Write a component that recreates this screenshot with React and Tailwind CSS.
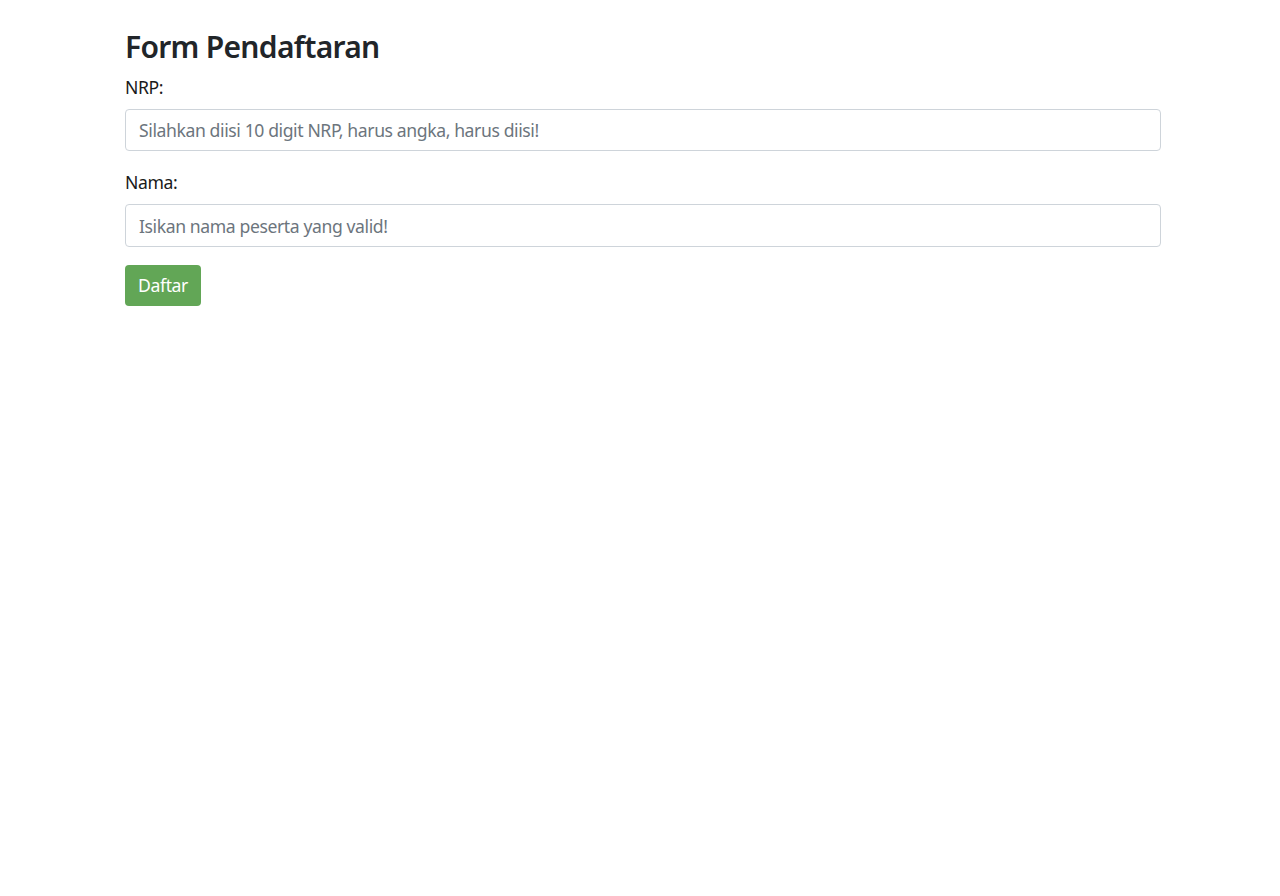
export default function App() {
  return (
    <div
      className="min-h-[896px] bg-white text-[#212529]"
      style={{ fontFamily: '"Noto Sans", "Open Sans", sans-serif' }}
    >
      <div className="ml-[125px] w-[1036px] pt-[28px]">
        <h3 className="mb-[9px] text-[30px] font-semibold leading-[37px] tracking-[-0.7px]">Form Pendaftaran</h3>
        <div className="mb-[18px]">
          <label className="mb-[9px] block text-[17.6px] leading-[26px] tracking-[-0.4px] text-[#1a1a1a]">NRP:</label>
          <input
            type="text"
            placeholder="Silahkan diisi 10 digit NRP, harus angka, harus diisi!"
            className="block h-[42px] w-full rounded-[4px] border border-[#ced4da] px-[13px] text-[17.6px] tracking-[-0.4px] placeholder:text-[#6c757d] outline-none"
          />
        </div>
        <div className="mb-[18px]">
          <label className="mb-[9px] block text-[17.6px] leading-[26px] tracking-[-0.4px] text-[#1a1a1a]">Nama:</label>
          <input
            type="text"
            placeholder="Isikan nama peserta yang valid!"
            className="block h-[43px] w-full rounded-[4px] border border-[#ced4da] px-[13px] text-[17.6px] tracking-[-0.4px] placeholder:text-[#6c757d] outline-none"
          />
        </div>
        <button className="block h-[41px] w-[76px] rounded-[4px] bg-[#62a656] text-[17.6px] tracking-[-0.4px] text-white">
          Daftar
        </button>
      </div>
    </div>
  );
}
